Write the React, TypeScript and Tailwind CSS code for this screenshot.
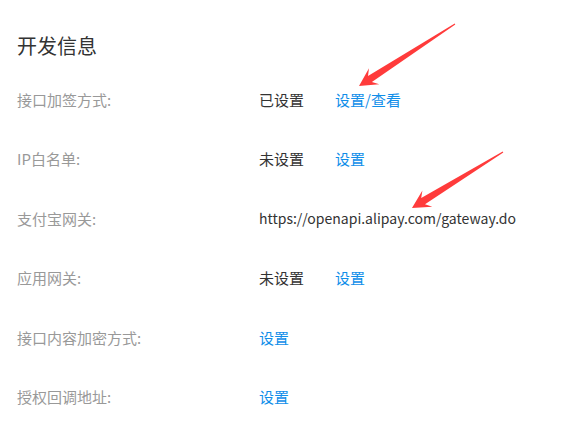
type Row = {
  label: string;
  status?: string;
  link?: string;
  url?: string;
};

const rows: Row[] = [
  { label: '接口加签方式:', status: '已设置', link: '设置/查看' },
  { label: 'IP白名单:', status: '未设置', link: '设置' },
  { label: '支付宝网关:', url: 'https://openapi.alipay.com/gateway.do' },
  { label: '应用网关:', status: '未设置', link: '设置' },
  { label: '接口内容加密方式:', link: '设置' },
  { label: '授权回调地址:', link: '设置' },
];

// tapered annotation arrow, tail -> tip
function arrowPoints(tx: number, ty: number, px: number, py: number) {
  const dx = px - tx;
  const dy = py - ty;
  const len = Math.hypot(dx, dy);
  const ux = dx / len;
  const uy = dy / len;
  const nx = -uy;
  const ny = ux;
  const at = (back: number, w: number) =>
    `${(px - ux * back + nx * w).toFixed(1)},${(py - uy * back + ny * w).toFixed(1)}`;
  return [
    at(len, 0.5),
    at(13, 3.6),
    at(18, 9.5),
    at(0, 0),
    at(18, -9.5),
    at(13, -3.6),
    at(len, -0.5),
  ].join(' ');
}

export default function App() {
  return (
    <div className="relative w-[579px] h-[432px] bg-white overflow-hidden font-['Noto_Sans_CJK_SC',sans-serif]">
      <div className="pl-[17px] pt-[32px]">
        <h2 className="text-[20px] leading-[28px] text-[#333] font-normal mb-[10px]">开发信息</h2>
        {rows.map((r) => (
          <div key={r.label} className="flex items-center h-[59.5px] text-[15px]">
            <div className="w-[242px] text-[#999]">{r.label}</div>
            {r.url ? (
              <div className="text-[14px] text-[#333]">{r.url}</div>
            ) : (
              <>
                {r.status && <div className="w-[76px] text-[#333]">{r.status}</div>}
                {r.link && <a className="text-[#108ee9] cursor-pointer">{r.link}</a>}
              </>
            )}
          </div>
        ))}
      </div>
      <svg className="absolute inset-0 pointer-events-none" width="579" height="432">
        <polygon points={arrowPoints(455, 24, 359, 86)} fill="#ff3b3b" />
        <polygon points={arrowPoints(503, 152, 412, 208)} fill="#ff3b3b" />
      </svg>
    </div>
  );
}
